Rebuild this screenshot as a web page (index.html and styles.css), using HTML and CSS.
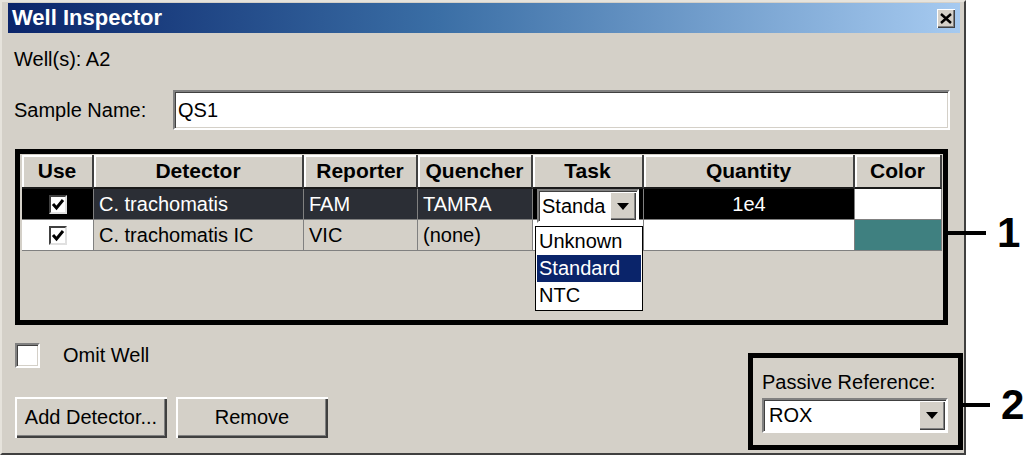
FILE: index.html
```html
<!DOCTYPE html>
<html lang="en">
<head>
    <meta charset="UTF-8">
    <meta name="viewport" content="width=device-width, initial-scale=1.0">
    <title>Well Inspector</title>
    <link rel="stylesheet" href="styles.css">
</head>
<body>
    <div class="window">
        <div class="titlebar">
            <span class="title">Well Inspector</span>
            <span class="close-btn">
                <svg width="12" height="11" viewBox="0 0 12 11"><path d="M1 1 L11 10 M11 1 L1 10" stroke="#000" stroke-width="2.4"/></svg>
            </span>
        </div>

        <div class="content">
            <div class="wells">Well(s): A2</div>

            <div class="sample-row">
                <span class="sample-label">Sample Name:</span>
                <div class="textbox">QS1</div>
            </div>

            <div class="detectors">
                <div class="grid">
                    <div class="th">Use</div>
                    <div class="th">Detector</div>
                    <div class="th">Reporter</div>
                    <div class="th">Quencher</div>
                    <div class="th">Task</div>
                    <div class="th">Quantity</div>
                    <div class="th">Color</div>

                    <div class="td use black"><span class="check"><svg width="14" height="13" viewBox="0 0 14 13"><path d="M2 6 L5.5 10 L12 2" fill="none" stroke="#000" stroke-width="3"/></svg></span></div>
                    <div class="td dark">C. trachomatis</div>
                    <div class="td dark">FAM</div>
                    <div class="td dark">TAMRA</div>
                    <div class="td task black">
                        <div class="combo small">
                            <span class="combo-text">Standa</span>
                            <span class="drop-btn"><svg width="12" height="7" viewBox="0 0 12 7"><path d="M0 0 H12 L6 7 Z" fill="#000"/></svg></span>
                        </div>
                        <div class="listbox">
                            <div class="opt">Unknown</div>
                            <div class="opt selected">Standard</div>
                            <div class="opt">NTC</div>
                        </div>
                    </div>
                    <div class="td black center">1e4</div>
                    <div class="td white"></div>

                    <div class="td use white"><span class="check"><svg width="14" height="13" viewBox="0 0 14 13"><path d="M2 6 L5.5 10 L12 2" fill="none" stroke="#000" stroke-width="3"/></svg></span></div>
                    <div class="td">C. trachomatis IC</div>
                    <div class="td">VIC</div>
                    <div class="td">(none)</div>
                    <div class="td white"></div>
                    <div class="td white"></div>
                    <div class="td teal"></div>
                </div>
                <span class="marker marker-1"><i class="marker-line"></i><b>1</b></span>
            </div>

            <div class="bottom">
                <div class="left-col">
                    <div class="omit">
                        <span class="box"></span>
                        <span>Omit Well</span>
                    </div>
                    <div class="buttons">
                        <button class="btn">Add Detector...</button>
                        <button class="btn">Remove</button>
                    </div>
                </div>

                <div class="passive">
                    <div class="passive-label">Passive Reference:</div>
                    <div class="combo wide">
                        <span class="combo-text">ROX</span>
                        <span class="drop-btn"><svg width="12" height="7" viewBox="0 0 12 7"><path d="M0 0 H12 L6 7 Z" fill="#000"/></svg></span>
                    </div>
                    <span class="marker marker-2"><i class="marker-line"></i><b>2</b></span>
                </div>
            </div>
        </div>
    </div>
</body>
</html>
```

FILE: styles.css
```css
body {
    margin: 0;
    background-color: #fff;
    font-family: "Liberation Sans", Arial, sans-serif;
    font-size: 20px;
    color: #000;
}

.window {
    width: 966px;
    height: 455px;
    box-sizing: border-box;
    background-color: #d4d0c8;
    border: 2px solid;
    border-color: #e6e3dc #404040 #404040 #e6e3dc;
}

.titlebar {
    height: 30px;
    margin: 1px 4px 0 6px;
    padding: 0 5px 0 4px;
    display: flex;
    align-items: center;
    justify-content: space-between;
    background: linear-gradient(to right, #0a246a 0%, #3a6ea5 45%, #a6caf0 100%);
}

.title {
    color: #fff;
    font-weight: bold;
    font-size: 22px;
}

.close-btn {
    width: 18px;
    height: 19px;
    display: flex;
    align-items: center;
    justify-content: center;
    background-color: #d4d0c8;
    box-shadow: inset 1px 1px 0 #fff, inset -1px -1px 0 #404040, inset -2px -2px 0 #808080;
}

.content {
    padding: 0 14px 0 12px;
}

.wells {
    margin-top: 14px;
    line-height: 24px;
}

.sample-row {
    margin-top: 19px;
    height: 40px;
    display: flex;
    align-items: center;
}

.sample-label {
    width: 159px;
}

.textbox {
    flex: 1;
    height: 40px;
    box-sizing: border-box;
    padding-left: 3px;
    line-height: 36px;
    background-color: #fff;
    border: 2px solid;
    border-color: #808080 #fff #fff #808080;
    box-shadow: inset 1px 1px 0 #404040, inset -1px -1px 0 #d4d0c8;
}

/* detector table */
.detectors {
    position: relative;
    margin: 19px 2px 0 1px;
    height: 176px;
    box-sizing: border-box;
    border: 5px solid #000;
    padding: 1px 1px 0 2px;
}

.grid {
    display: grid;
    grid-template-columns: 72px 210px 114px 115px 111px 211px 87px;
    grid-template-rows: 34px 31px 31px;
}

.th {
    display: flex;
    align-items: center;
    justify-content: center;
    font-weight: bold;
    font-size: 21px;
    background-color: #d4d0c8;
    border-right: 2px solid #404040;
    border-bottom: 2px solid #1a1a1a;
    box-shadow: inset 2px 2px 0 #fff;
}

.td {
    display: flex;
    align-items: center;
    padding-left: 5px;
    border-right: 1px solid #808080;
    border-bottom: 1px solid #808080;
    white-space: nowrap;
}

.td.dark {
    background-color: #2b2e35;
    color: #fff;
}

.td.black {
    background-color: #000;
    color: #fff;
}

.td.white {
    background-color: #fff;
}

.td.teal {
    background-color: #3f8080;
}

.td.center {
    justify-content: center;
    padding-left: 0;
}

.td.use {
    justify-content: center;
    padding-left: 0;
}

.check {
    width: 18px;
    height: 19px;
    box-sizing: border-box;
    display: flex;
    align-items: center;
    justify-content: center;
    background-color: #fff;
    border: 2px solid;
    border-color: #404040 #e0e0e0 #e0e0e0 #404040;
}

.td.task {
    position: relative;
    padding-left: 4px;
    align-items: flex-start;
}

.combo {
    display: flex;
    align-items: center;
    justify-content: space-between;
    box-sizing: border-box;
    background-color: #fff;
    color: #000;
    border: 2px solid;
    border-color: #808080 #fff #fff #808080;
    box-shadow: inset 1px 1px 0 #404040;
}

.combo.small {
    width: 102px;
    height: 34px;
    padding: 1px 1px 1px 3px;
}

.drop-btn {
    width: 26px;
    height: 100%;
    display: flex;
    align-items: center;
    justify-content: center;
    background-color: #d4d0c8;
    box-shadow: inset 1px 1px 0 #fff, inset -1px -1px 0 #404040, inset -2px -2px 0 #808080;
}

.listbox {
    position: absolute;
    top: 37px;
    left: 2px;
    z-index: 2;
    width: 108px;
    box-sizing: border-box;
    padding: 1px;
    background-color: #fff;
    color: #000;
    border: 1px solid #000;
}

.opt {
    height: 27px;
    line-height: 27px;
    padding-left: 2px;
}

.opt.selected {
    background-color: #0a246a;
    color: #fff;
}

/* callouts */
.marker {
    position: absolute;
    display: flex;
    align-items: center;
    gap: 11px;
    height: 44px;
}

.marker b {
    font-size: 42px;
    line-height: 44px;
}

.marker-line {
    display: block;
    height: 4px;
    background-color: #000;
}

.marker-1 {
    top: 57px;
    left: calc(100% + 1px);
}

.marker-1 .marker-line {
    width: 42px;
}

.marker-2 {
    top: 25px;
    left: calc(100% + 5px);
}

.marker-2 .marker-line {
    width: 27px;
}

/* bottom part */
.bottom {
    display: flex;
    justify-content: space-between;
    align-items: flex-start;
}

.left-col {
    margin: 18px 0 0 1px;
}

.omit {
    height: 25px;
    display: flex;
    align-items: center;
    gap: 23px;
}

.box {
    width: 25px;
    height: 25px;
    box-sizing: border-box;
    background-color: #fff;
    border: 2px solid;
    border-color: #808080 #fff #fff #808080;
    box-shadow: inset 1px 1px 0 #404040, inset -1px -1px 0 #d4d0c8;
}

.buttons {
    margin-top: 29px;
    display: flex;
    gap: 9px;
}

.btn {
    width: 152px;
    height: 41px;
    font-family: inherit;
    font-size: 20px;
    color: #000;
    background-color: #d4d0c8;
    border: none;
    padding: 0;
    box-shadow: inset 2px 2px 0 #fff, inset -2px -2px 0 #404040, inset -3px -3px 0 #808080;
}

.passive {
    position: relative;
    margin: 28px -13px 0 0;
    width: 215px;
    height: 97px;
    box-sizing: border-box;
    border: 5px solid #000;
    padding: 12px 10px 0 9px;
}

.passive-label {
    line-height: 24px;
}

.combo.wide {
    margin-top: 4px;
    width: 186px;
    height: 35px;
    padding: 1px 1px 1px 5px;
}
```
